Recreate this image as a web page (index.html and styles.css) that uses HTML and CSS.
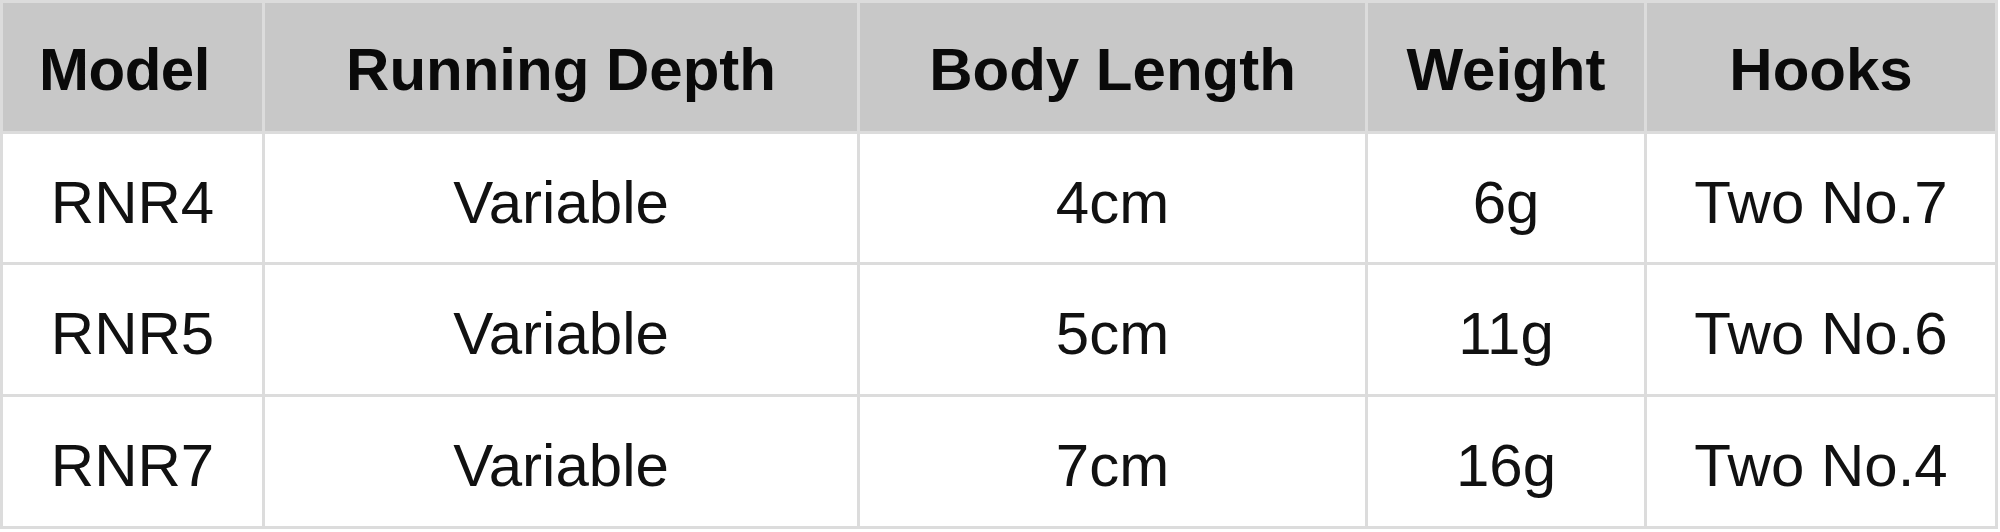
FILE: index.html
```html
<!DOCTYPE html>
<html lang="en">
<head>
<meta charset="utf-8">
<title>Lure specifications</title>
<link rel="stylesheet" href="styles.css">
</head>
<body>
<div class="spec-table" role="table">
  <div class="cell head head-first" role="columnheader">Model</div>
  <div class="cell head" role="columnheader">Running Depth</div>
  <div class="cell head" role="columnheader">Body Length</div>
  <div class="cell head" role="columnheader">Weight</div>
  <div class="cell head" role="columnheader">Hooks</div>

  <div class="cell" role="cell">RNR4</div>
  <div class="cell" role="cell">Variable</div>
  <div class="cell" role="cell">4cm</div>
  <div class="cell" role="cell">6g</div>
  <div class="cell" role="cell">Two No.7</div>

  <div class="cell" role="cell">RNR5</div>
  <div class="cell" role="cell">Variable</div>
  <div class="cell" role="cell">5cm</div>
  <div class="cell" role="cell">11g</div>
  <div class="cell" role="cell">Two No.6</div>

  <div class="cell" role="cell">RNR7</div>
  <div class="cell" role="cell">Variable</div>
  <div class="cell" role="cell">7cm</div>
  <div class="cell" role="cell">16g</div>
  <div class="cell" role="cell">Two No.4</div>
</div>
</body>
</html>
```
FILE: styles.css
```css
html, body {
  margin: 0;
  padding: 0;
  background: #ffffff;
}

.spec-table {
  display: grid;
  grid-template-columns: 259px 592px 505px 276px 348px;
  grid-template-rows: 128px 128px 129px 129px;
  gap: 3px;
  padding: 3px;
  width: max-content;
  background: #dcdcdc;
  font-family: "Liberation Sans", Arial, sans-serif;
  font-size: 60px;
  color: #111111;
}

.cell {
  display: flex;
  align-items: center;
  justify-content: center;
  background: #ffffff;
  padding-top: 8px;
  box-sizing: border-box;
}

.cell.head {
  background: #c8c8c8;
  font-weight: bold;
  color: #0a0a0a;
  padding-top: 4px;
}

.cell.head-first {
  padding-right: 16px;
  letter-spacing: -0.5px;
}
```
